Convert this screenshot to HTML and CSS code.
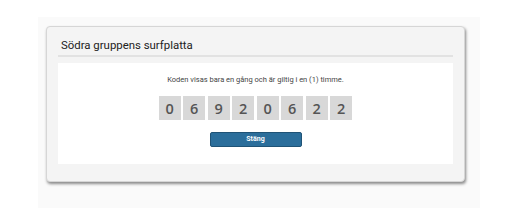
FILE: index.html
```html
<!DOCTYPE html>
<html lang="sv">
<head>
<meta charset="utf-8">
<link rel="stylesheet" href="styles.css">
</head>
<body>
<div class="page">
  <div class="card">
    <h2 class="title">Södra gruppens surfplatta</h2>
    <div class="panel">
      <p class="info">Koden visas bara en gång och är giltig i en (1) timme.</p>
      <div class="code">
        <span class="digit">0</span><span class="digit">6</span><span class="digit">9</span><span class="digit">2</span><span class="digit">0</span><span class="digit">6</span><span class="digit">2</span><span class="digit">2</span>
      </div>
      <button class="close">Stäng</button>
    </div>
  </div>
</div>
</body>
</html>
```
FILE: styles.css
```css
html, body {
  margin: 0;
  padding: 0;
  background: #ffffff;
  height: 100%;
}
body {
  font-family: Roboto, "Liberation Sans", sans-serif;
}
.page {
  margin-left: 38px;
  margin-top: 17px;
  width: 442px;
  height: 191px;
  background: #fafafa;
  padding: 9px 0 0 8px;
  box-sizing: border-box;
}
.card {
  width: 419px;
  height: 156px;
  box-sizing: border-box;
  background: #f4f4f4;
  border: 1px solid #d6d6d6;
  border-radius: 4px;
  box-shadow: 1px 2px 3px rgba(0, 0, 0, 0.45);
  padding: 9px 11px 0 11px;
}
.title {
  margin: 0;
  font-size: 11.4px;
  font-weight: 400;
  color: #222222;
  line-height: 18px;
  padding: 0 0 1px 3px;
  border-bottom: 2px solid #e2e2e2;
}
.panel {
  margin-top: 6px;
  background: #ffffff;
  height: 101px;
  box-sizing: border-box;
  padding-top: 12px;
  display: flex;
  flex-direction: column;
  align-items: center;
}
.info {
  margin: 0;
  font-size: 7.5px;
  line-height: 10px;
  color: #444;
}
.code {
  margin-top: 11px;
  display: flex;
  gap: 2.5px;
}
.digit {
  width: 22px;
  height: 24px;
  background: #d8d8d8;
  color: #555555;
  font-family: "Open Sans", sans-serif;
  font-size: 14.5px;
  font-weight: 600;
  display: flex;
  align-items: center;
  justify-content: center;
}
.close {
  margin-top: 12px;
  width: 92px;
  height: 15px;
  padding: 0;
  background: #2b6e9b;
  border: 1px solid #1f5376;
  border-radius: 2px;
  color: #ffffff;
  font-family: Roboto, "Liberation Sans", sans-serif;
  font-size: 7px;
  font-weight: 700;
  line-height: 13px;
}
```
